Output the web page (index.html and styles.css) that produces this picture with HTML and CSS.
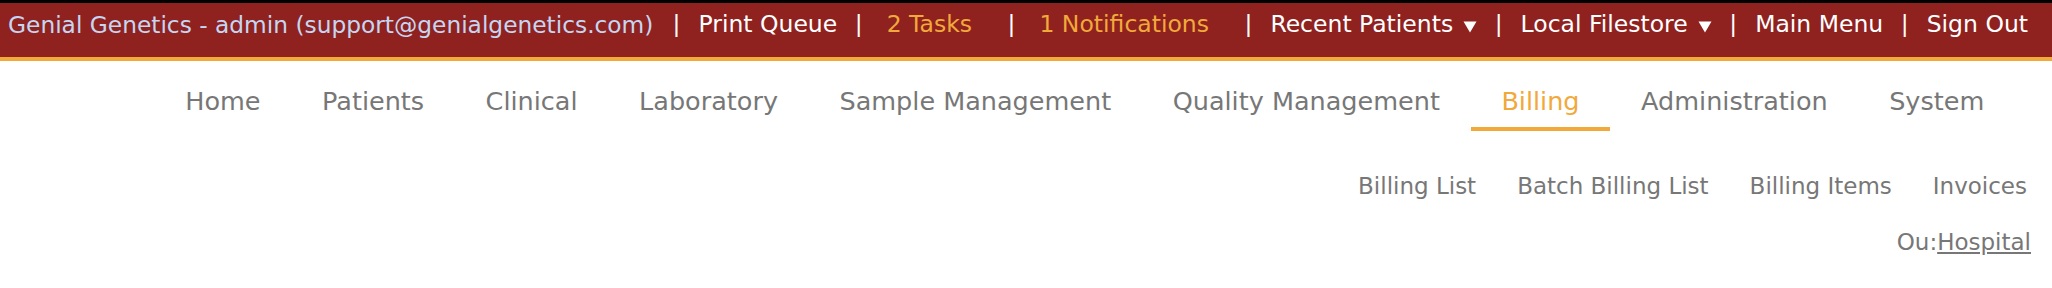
FILE: index.html
```html
<!DOCTYPE html>
<html lang="en">
<head>
<meta charset="utf-8">
<title>Genial Genetics - Billing</title>
<link rel="stylesheet" href="styles.css">
</head>
<body>
<header class="topbar">
  <span class="brand">Genial Genetics - admin (support@genialgenetics.com)</span>
  <nav class="toplinks">
    <span class="sep">|</span>
    <a class="toplink">Print Queue</a>
    <span class="sep">|</span>
    <a class="toplink count">2 Tasks</a>
    <span class="sep">|</span>
    <a class="toplink count">1 Notifications</a>
    <span class="sep">|</span>
    <a class="toplink">Recent Patients<svg class="caret" viewBox="0 0 14 12" width="14" height="12"><polygon points="0.5,0.5 13.5,0.5 7,11.5" fill="#fff"/></svg></a>
    <span class="sep">|</span>
    <a class="toplink">Local Filestore<svg class="caret" viewBox="0 0 14 12" width="14" height="12"><polygon points="0.5,0.5 13.5,0.5 7,11.5" fill="#fff"/></svg></a>
    <span class="sep">|</span>
    <a class="toplink">Main Menu</a>
    <span class="sep">|</span>
    <a class="toplink">Sign Out</a>
  </nav>
</header>
<nav class="mainnav">
  <a class="navitem">Home</a>
  <a class="navitem">Patients</a>
  <a class="navitem">Clinical</a>
  <a class="navitem">Laboratory</a>
  <a class="navitem">Sample Management</a>
  <a class="navitem">Quality Management</a>
  <a class="navitem active">Billing</a>
  <a class="navitem">Administration</a>
  <a class="navitem">System</a>
</nav>
<nav class="subnav">
  <a class="subitem">Billing List</a>
  <a class="subitem">Batch Billing List</a>
  <a class="subitem">Billing Items</a>
  <a class="subitem">Invoices</a>
</nav>
<div class="ou">Ou:<a class="oulink">Hospital</a></div>
</body>
</html>
```
FILE: styles.css
```css
html, body {
  margin: 0;
  padding: 0;
  background: #ffffff;
}
body {
  font-family: "DejaVu Sans", Verdana, sans-serif;
  width: 2052px;
}
a {
  text-decoration: none;
  cursor: pointer;
}
.topbar {
  box-sizing: border-box;
  height: 61px;
  background: #8f221f;
  border-top: 3px solid #000000;
  border-bottom: 4px solid #f2a93b;
  display: flex;
  justify-content: space-between;
  align-items: flex-start;
  padding: 8px 24px 0 8px;
  font-size: 23.5px;
  line-height: 27px;
  color: #ffffff;
  white-space: nowrap;
}
.brand {
  color: #c6d6f2;
  font-size: 23.3px;
  flex-shrink: 0;
}
.toplinks {
  display: flex;
  align-items: flex-start;
  flex-shrink: 0;
}
.toplink {
  color: #ffffff;
  display: flex;
  align-items: flex-start;
}
.toplink.count {
  color: #f2a93b;
  margin-left: 6px;
  margin-right: 18px;
}
.sep {
  color: #ffffff;
  margin: 0 18px 0 17.5px;
}
.caret {
  margin: 10px 0 0 10px;
  display: block;
}
.mainnav {
  display: flex;
  justify-content: flex-end;
  padding: 24px 37px 0 0;
  height: 50px;
}
.navitem {
  font-size: 25.5px;
  line-height: 32px;
  color: #777777;
  padding: 0 30.75px;
  height: 46px;
  box-sizing: border-box;
}
.navitem.active {
  color: #f2a93b;
  border-bottom: 4px solid #f2a93b;
}
.subnav {
  display: flex;
  justify-content: flex-end;
  gap: 41px;
  padding: 0 25px 0 0;
  margin-top: 38px;
  font-size: 23px;
  line-height: 27px;
}
.subitem {
  color: #777777;
}
.ou {
  text-align: right;
  padding: 29px 21px 0 0;
  font-size: 23px;
  line-height: 27px;
  color: #777777;
}
.oulink {
  color: #777777;
  text-decoration: underline;
}
```
